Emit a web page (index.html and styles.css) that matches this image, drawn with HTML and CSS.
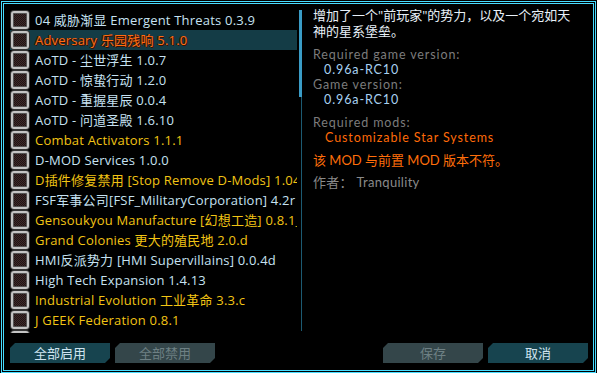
FILE: index.html
```html
<!DOCTYPE html>
<html>
<head>
<meta charset="utf-8">
<link rel="stylesheet" href="styles.css">
</head>
<body>
<div class="frame">
  <div class="inner">
    <div class="main">
      <div class="list">
        <div class="row"><span class="cb"></span><span class="lbl c-blue">04 威胁渐显 Emergent Threats 0.3.9</span></div>
        <div class="row sel"><span class="cb"></span><span class="lbl c-orange">Adversary 乐园残响 5.1.0</span></div>
        <div class="row"><span class="cb"></span><span class="lbl c-blue">AoTD - 尘世浮生 1.0.7</span></div>
        <div class="row"><span class="cb"></span><span class="lbl c-blue">AoTD - 惊蛰行动 1.2.0</span></div>
        <div class="row"><span class="cb"></span><span class="lbl c-blue">AoTD - 重握星辰 0.0.4</span></div>
        <div class="row"><span class="cb"></span><span class="lbl c-blue">AoTD - 问道圣殿 1.6.10</span></div>
        <div class="row"><span class="cb"></span><span class="lbl c-yellow">Combat Activators 1.1.1</span></div>
        <div class="row"><span class="cb"></span><span class="lbl c-blue">D-MOD Services 1.0.0</span></div>
        <div class="row"><span class="cb"></span><span class="lbl c-yellow">D插件修复禁用 [Stop Remove D-Mods] 1.04</span></div>
        <div class="row"><span class="cb"></span><span class="lbl c-blue">FSF军事公司[FSF_MilitaryCorporation] 4.2r</span></div>
        <div class="row"><span class="cb"></span><span class="lbl c-yellow">Gensoukyou Manufacture [幻想工造] 0.8.1_</span></div>
        <div class="row"><span class="cb"></span><span class="lbl c-yellow">Grand Colonies 更大的殖民地 2.0.d</span></div>
        <div class="row"><span class="cb"></span><span class="lbl c-blue">HMI反派势力 [HMI Supervillains] 0.0.4d</span></div>
        <div class="row"><span class="cb"></span><span class="lbl c-blue">High Tech Expansion 1.4.13</span></div>
        <div class="row"><span class="cb"></span><span class="lbl c-yellow">Industrial Evolution 工业革命 3.3.c</span></div>
        <div class="row"><span class="cb"></span><span class="lbl c-yellow">J GEEK Federation 0.8.1</span></div>
        <div class="row"><span class="cb"></span><span class="lbl c-blue"></span></div>
      </div>
      <div class="scroll"><div class="thumb"></div><div class="track"></div></div>
      <div class="detail">
        <div class="desc">增加了一个"前玩家"的势力，以及一个宛如天<br>神的星系堡垒。</div>
        <div class="block">
          <div class="label">Required game version:</div>
          <div class="val">0.96a-RC10</div>
          <div class="label">Game version:</div>
          <div class="val">0.96a-RC10</div>
        </div>
        <div class="block">
          <div class="label">Required mods:</div>
          <div class="val mod">Customizable Star Systems</div>
        </div>
        <div class="block warn">该 MOD 与前置 MOD 版本不符。</div>
        <div class="block author">作者：&nbsp;Tranquility</div>
      </div>
    </div>
    <div class="buttons">
      <div class="btn on">全部启用</div>
      <div class="btn off">全部禁用</div>
      <div class="spacer"></div>
      <div class="btn off">保存</div>
      <div class="btn on">取消</div>
    </div>
  </div>
</div>
</body>
</html>
```

FILE: styles.css
```css
html, body {
  margin: 0;
  padding: 0;
  background: #000;
}
body {
  font-family: "Open Sans", "Noto Sans CJK SC", sans-serif;
  font-size: 13px;
  width: 597px;
  height: 373px;
  overflow: hidden;
}
.frame {
  margin: 1px 0 0 1px;
  width: 595px;
  height: 372px;
  box-sizing: border-box;
  border: 1px solid #48dcff;
  padding: 1px;
}
.inner {
  box-sizing: border-box;
  height: 100%;
  border: 1px solid #48dcff;
  padding: 3px 5px 0 6px;
  display: flex;
  flex-direction: column;
}
.main {
  display: flex;
  height: 326px;
}
.list {
  margin-top: 3px;
  width: 287px;
  height: 323px;
  overflow: hidden;
  flex: none;
}
.row {
  height: 20px;
  display: flex;
  align-items: center;
  white-space: nowrap;
}
.row.sel {
  background: #143c46;
}
.cb {
  flex: none;
  width: 18px;
  height: 18px;
  margin-left: 1px;
  box-sizing: border-box;
  border-radius: 3px;
  border: 2px solid #c4c4c4;
  box-shadow: 0 0 0 1px #555 inset, 0 0 0 1px #333;
  background-color: #2a1c1c;
  background-image: repeating-conic-gradient(#3e2a2a 0 25%, #201414 0 50%);
  background-size: 2px 2px;
}
.lbl {
  margin-left: 6px;
  line-height: 20px;
  letter-spacing: 0.2px;
  text-shadow: 0 0 1px #000;
}
.c-blue { color: #c6e2f2; }
.c-yellow { color: #f2c414; }
.c-orange { color: #ff6c10; text-shadow: 1px 1px 0 #3a1000, -1px 0 0 #3a1000; }
.scroll {
  flex: none;
  width: 3px;
  margin-left: 2px;
  margin-top: 3px;
  display: flex;
  flex-direction: column;
  align-items: flex-end;
}
.thumb {
  width: 3px;
  height: 87px;
  background: #3a9cc6;
}
.track {
  width: 1px;
  height: 234px;
  background: #1c5a72;
}
.detail {
  margin-left: 11px;
  width: 274px;
  padding-top: 0;
  color: #e6eef6;
}
.desc {
  line-height: 16px;
  color: #e8f0f8;
}
.block {
  margin-top: 8px;
  line-height: 15px;
  font-family: Lato, "Noto Sans CJK SC", sans-serif;
  font-size: 12.5px;
  letter-spacing: 0.9px;
}
.label {
  color: #7c7c7c;
}
.val {
  color: #a8d2f2;
  padding-left: 11px;
}
.val.mod {
  color: #ff6a08;
  padding-left: 12px;
}
.warn {
  color: #ff6e0a;
  font-size: 13px;
  letter-spacing: 0;
  line-height: 16px;
  margin-top: 7px;
}
.author {
  margin-top: 6px;
  color: #8a8a8a;
  font-size: 13px;
  letter-spacing: 0.3px;
  line-height: 16px;
}
.buttons {
  margin-top: 10px;
  display: flex;
  height: 20px;
}
.btn {
  flex: none;
  width: 100px;
  height: 20px;
  line-height: 20px;
  text-align: center;
  font-size: 13px;
  clip-path: polygon(5px 0, 100% 0, 100% calc(100% - 5px), calc(100% - 5px) 100%, 0 100%, 0 5px);
}
.btn + .btn { margin-left: 5px; }
.btn.on {
  background: #17444f;
  color: #cfe4f0;
}
.btn.off {
  background: #34464a;
  color: #6e8084;
}
.spacer {
  flex: 1;
}
.spacer + .btn { margin-left: 0; }
```
